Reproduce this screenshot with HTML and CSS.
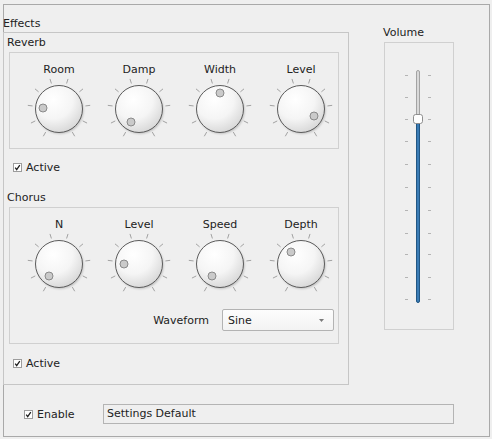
FILE: index.html
```html
<!DOCTYPE html>
<html>
<head>
<meta charset="utf-8">
<link rel="stylesheet" href="styles.css">
</head>
<body>
<svg class="defs" width="0" height="0">
  <defs>
    <radialGradient id="kg" cx="38%" cy="30%" r="75%">
      <stop offset="0" stop-color="#ffffff"/>
      <stop offset="0.55" stop-color="#f5f5f5"/>
      <stop offset="1" stop-color="#d6d6d6"/>
    </radialGradient>
    <filter id="ksh" x="-20%" y="-20%" width="140%" height="140%">
      <feGaussianBlur stdDeviation="1.2"/>
    </filter>
    <g id="dialbase">
      <g stroke="#a2a2a2" stroke-width="1" stroke-linecap="round">
        <line x1="21.5" y1="58.4" x2="19.5" y2="61.9"/>
        <line x1="10.9" y1="47.1" x2="7.3" y2="48.9"/>
        <line x1="8.2" y1="31.9" x2="4.2" y2="31.4"/>
        <line x1="14.3" y1="17.6" x2="11.3" y2="15.1"/>
        <line x1="27.3" y1="9.1" x2="26.1" y2="5.3"/>
        <line x1="42.7" y1="9.1" x2="43.9" y2="5.3"/>
        <line x1="55.7" y1="17.6" x2="58.7" y2="15.1"/>
        <line x1="61.8" y1="31.9" x2="65.8" y2="31.4"/>
        <line x1="59.1" y1="47.1" x2="62.7" y2="48.9"/>
        <line x1="48.5" y1="58.4" x2="50.5" y2="61.9"/>
      </g>
      <circle cx="36" cy="36.3" r="23.5" fill="rgba(0,0,0,0.22)" filter="url(#ksh)"/>
      <circle cx="35" cy="35" r="23.5" fill="url(#kg)" stroke="#5c5c5c" stroke-width="1"/>
    </g>
    <g id="checkbox">
      <rect x="0.5" y="0.5" width="8" height="8" fill="#ffffff" stroke="#9c9c9c"/>
      <path d="M2.2 4.6 L3.7 6.6 L6.8 2.2" fill="none" stroke="#1e1e1e" stroke-width="1.3"/>
    </g>
  </defs>
</svg>

<div class="window">
  <div class="top">
    <div class="effects-col">
      <div class="title effects-title">Effects</div>
      <div class="frame effects">
        <div class="title sub-title">Reverb</div>
        <div class="knobs reverb">
          <div class="knobrow">
            <div class="dial"><div class="label">Room</div>
              <svg viewBox="0 0 70 70"><use href="#dialbase"/><circle cx="19" cy="34" r="4" class="dot"/></svg></div>
            <div class="dial"><div class="label">Damp</div>
              <svg viewBox="0 0 70 70"><use href="#dialbase"/><circle cx="27" cy="48" r="4" class="dot"/></svg></div>
            <div class="dial"><div class="label">Width</div>
              <svg viewBox="0 0 70 70"><use href="#dialbase"/><circle cx="35" cy="19" r="4" class="dot"/></svg></div>
            <div class="dial"><div class="label">Level</div>
              <svg viewBox="0 0 70 70"><use href="#dialbase"/><circle cx="48" cy="42" r="4" class="dot"/></svg></div>
          </div>
        </div>
        <div class="check active-1">
          <svg class="cb" viewBox="0 0 9 9"><use href="#checkbox"/></svg><span>Active</span>
        </div>
        <div class="title sub-title chorus-title">Chorus</div>
        <div class="knobs chorus">
          <div class="knobrow">
            <div class="dial"><div class="label">N</div>
              <svg viewBox="0 0 70 70"><use href="#dialbase"/><circle cx="25" cy="47" r="4" class="dot"/></svg></div>
            <div class="dial"><div class="label">Level</div>
              <svg viewBox="0 0 70 70"><use href="#dialbase"/><circle cx="20" cy="35" r="4" class="dot"/></svg></div>
            <div class="dial"><div class="label">Speed</div>
              <svg viewBox="0 0 70 70"><use href="#dialbase"/><circle cx="27" cy="47" r="4" class="dot"/></svg></div>
            <div class="dial"><div class="label">Depth</div>
              <svg viewBox="0 0 70 70"><use href="#dialbase"/><circle cx="25" cy="23" r="4" class="dot"/></svg></div>
          </div>
          <div class="waverow">
            <span class="wavelabel">Waveform</span>
            <div class="combo"><span>Sine</span>
              <svg class="arrow" viewBox="0 0 5 3"><path d="M0 0 L5 0 L2.5 3 Z" fill="#7a7a7a"/></svg>
            </div>
          </div>
        </div>
        <div class="check active-2">
          <svg class="cb" viewBox="0 0 9 9"><use href="#checkbox"/></svg><span>Active</span>
        </div>
      </div>
    </div>
    <div class="volume-col">
      <div class="title volume-title">Volume</div>
      <div class="slider-frame">
        <svg class="slider" viewBox="0 0 68 286" width="68" height="286">
          <g fill="#b4b4b4">
            <rect x="20" y="32" width="3" height="1"/><rect x="43" y="32" width="3" height="1"/>
            <rect x="20" y="54" width="3" height="1"/><rect x="43" y="54" width="3" height="1"/>
            <rect x="20" y="76" width="3" height="1"/><rect x="43" y="76" width="3" height="1"/>
            <rect x="20" y="98" width="3" height="1"/><rect x="43" y="98" width="3" height="1"/>
            <rect x="20" y="121" width="3" height="1"/><rect x="43" y="121" width="3" height="1"/>
            <rect x="20" y="144" width="3" height="1"/><rect x="43" y="144" width="3" height="1"/>
            <rect x="20" y="167" width="3" height="1"/><rect x="43" y="167" width="3" height="1"/>
            <rect x="20" y="190" width="3" height="1"/><rect x="43" y="190" width="3" height="1"/>
            <rect x="20" y="211" width="3" height="1"/><rect x="43" y="211" width="3" height="1"/>
            <rect x="20" y="234" width="3" height="1"/><rect x="43" y="234" width="3" height="1"/>
            <rect x="20" y="256" width="3" height="1"/><rect x="43" y="256" width="3" height="1"/>
          </g>
          <rect x="31.5" y="27.5" width="3" height="50" rx="1.5" fill="#d9d9d9" stroke="#a3a3a3"/>
          <rect x="31.5" y="76.5" width="3" height="183" rx="1.5" fill="#3a7cb5" stroke="#225683"/>
          <rect x="28.5" y="71.5" width="9" height="9" rx="2.2" fill="#ffffff" stroke="#8e8e8e"/>
        </svg>
      </div>
    </div>
  </div>
  <div class="bottom">
    <div class="check enable">
      <svg class="cb" viewBox="0 0 9 9"><use href="#checkbox"/></svg><span>Enable</span>
    </div>
    <div class="textfield">Settings Default</div>
  </div>
</div>
</body>
</html>
```

FILE: styles.css
```css
html, body {
  margin: 0;
  padding: 0;
  background: #efefef;
  width: 492px;
  height: 439px;
  overflow: hidden;
}

body {
  font-family: "DejaVu Sans", "Liberation Sans", sans-serif;
  font-size: 11px;
  line-height: 13px;
  color: #222222;
}

.defs {
  display: block;
  width: 0;
  height: 0;
}

.window {
  box-sizing: border-box;
  margin: 4px 0 0 3px;
  width: 487px;
  height: 433px;
  border: 1px solid #a9a9a9;
  padding-top: 12px;
  display: flex;
  flex-direction: column;
}

.top {
  display: flex;
  align-items: flex-start;
}

.title {
  height: 13px;
  white-space: nowrap;
}

.effects-col {
  margin-left: -1px;
  width: 346px;
}

.effects-title {
  margin-bottom: 2px;
}

.effects {
  box-sizing: border-box;
  height: 353px;
  border: 1px solid #c6c6c6;
  padding: 3px 9px 0 5px;
}

.sub-title {
  margin-left: -2px;
  margin-bottom: 3px;
}

.chorus-title {
  margin-top: 17px;
}

.knobs {
  border: 1px solid #d0d0d0;
  padding: 10px 0 4px 14px;
}

.chorus {
  padding-bottom: 12px;
}

.knobrow {
  display: flex;
  gap: 10px;
}

.knobrow .dial:nth-child(n+3) {
  margin-left: 1px;
}

.dial {
  width: 70px;
  display: flex;
  flex-direction: column;
  align-items: center;
}

.dial .label {
  height: 13px;
  white-space: nowrap;
}

.dial svg {
  display: block;
  width: 70px;
  height: 70px;
  margin-top: -2px;
}

.dot {
  fill: #cacaca;
  stroke: #8a8a8a;
  stroke-width: 1;
}

.waverow {
  margin-top: 10px;
  display: flex;
  justify-content: flex-end;
  align-items: center;
  gap: 13px;
  padding-right: 4px;
}

.combo {
  box-sizing: border-box;
  width: 112px;
  height: 22px;
  border: 1px solid #b3b3b3;
  border-radius: 2px;
  background: linear-gradient(#fdfdfd, #f3f3f3);
  display: flex;
  align-items: center;
  justify-content: space-between;
  padding: 0 9px 0 5px;
}

.arrow {
  display: block;
  width: 5px;
  height: 3px;
}

.check {
  display: flex;
  align-items: center;
  height: 13px;
  gap: 4px;
}

.cb {
  display: block;
  width: 9px;
  height: 9px;
}

.active-1 {
  margin-top: 12px;
  margin-left: 4px;
}

.active-2 {
  margin-top: 13px;
  margin-left: 4px;
}

.volume-col {
  margin-left: 34px;
  padding-top: 9px;
}

.volume-title {
  margin-bottom: 3px;
}

.slider-frame {
  box-sizing: border-box;
  margin-left: 1px;
  width: 70px;
  height: 288px;
  border: 1px solid #d0d0d0;
}

.slider {
  display: block;
}

.bottom {
  margin-top: 19px;
  display: flex;
  align-items: center;
  padding-left: 20px;
}

.enable {
  width: 79px;
  height: 20px;
}

.textfield {
  box-sizing: border-box;
  width: 351px;
  height: 20px;
  border: 1px solid #b4b4b4;
  padding-left: 3px;
  line-height: 18px;
  white-space: nowrap;
}
```
